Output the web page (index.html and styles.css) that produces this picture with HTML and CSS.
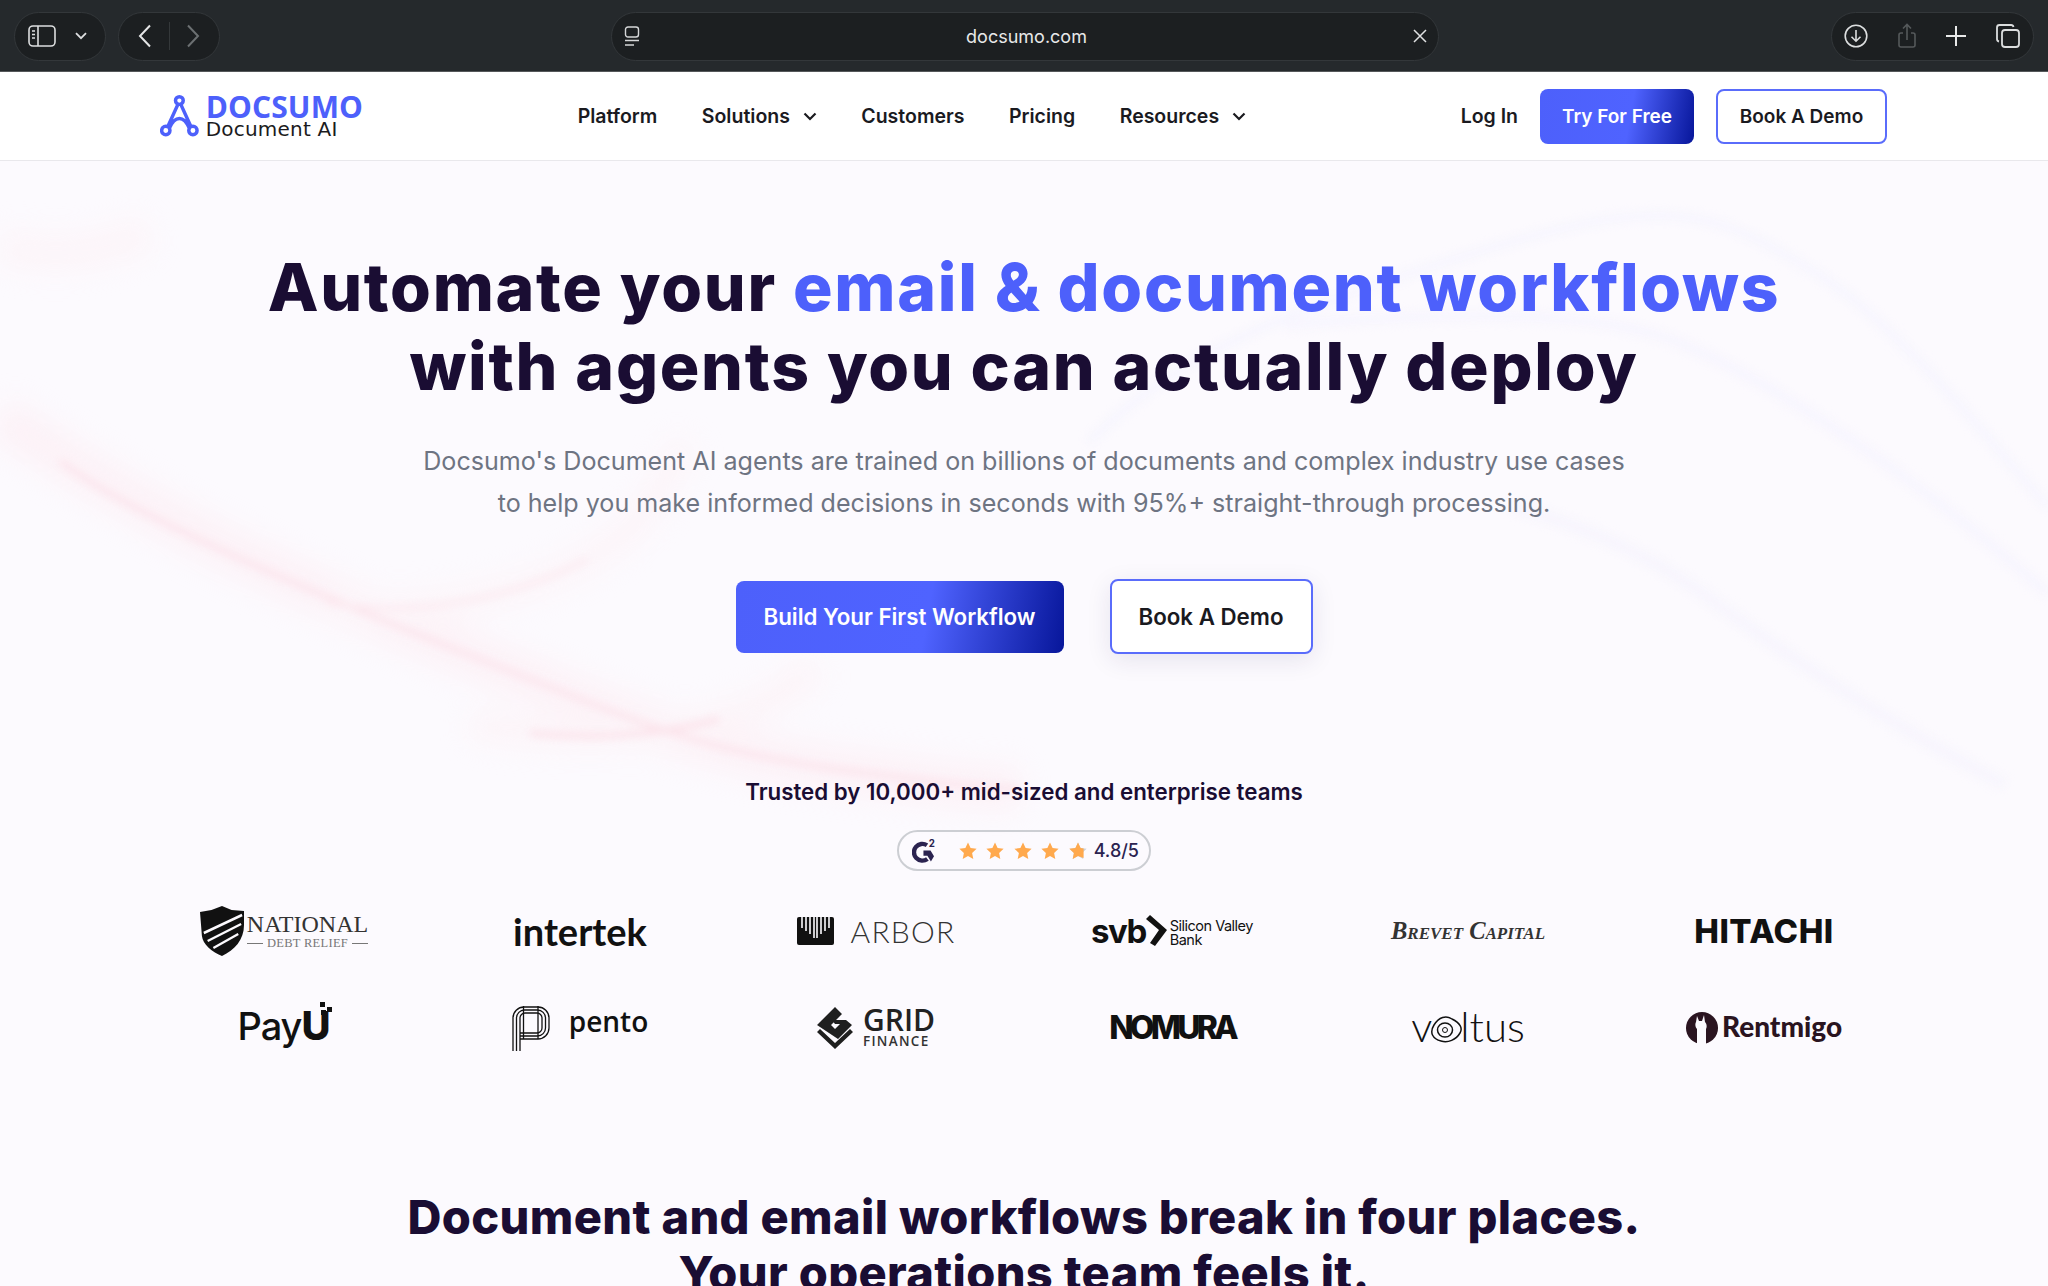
FILE: index.html
```html
<!DOCTYPE html>
<html lang="en">

<head>
    <meta charset="UTF-8">
    <meta name="viewport" content="width=device-width, initial-scale=1.0">
    <link rel="stylesheet" href="styles.css">
    <title>Docsumo</title>
</head>

<body>

    <!-- browser chrome -->
    <header class="toolbar">
        <div class="pill pill-side">
            <svg width="28" height="22" viewBox="0 0 28 22" fill="none" stroke="#dcdedf" stroke-width="1.6"><rect x="1" y="1" width="26" height="20" rx="4"/><path d="M10 1v20"/><path d="M4 6h3M4 9.5h3M4 13h3" stroke-width="1.3"/></svg>
            <svg width="12" height="8" viewBox="0 0 12 8" fill="none" stroke="#dcdedf" stroke-width="1.8"><path d="M1 1.2l5 5 5-5"/></svg>
        </div>
        <div class="pill pill-nav">
            <svg width="14" height="24" viewBox="0 0 14 24" fill="none" stroke="#e4e5e6" stroke-width="2"><path d="M12 1.5L2 12l10 10.5"/></svg>
            <span class="pill-sep"></span>
            <svg width="14" height="24" viewBox="0 0 14 24" fill="none" stroke="#6c7072" stroke-width="2"><path d="M2 1.5L12 12 2 22.5"/></svg>
        </div>
        <div class="pill pill-url">
            <svg width="16" height="21" viewBox="0 0 16 21" fill="none" stroke="#d5d7d8" stroke-width="1.4"><rect x="1.5" y="1" width="13" height="10" rx="2.5"/><path d="M1 14.5h14M1 19h9"/></svg>
            <span class="url-text">docsumo.com</span>
            <svg width="14" height="14" viewBox="0 0 14 14" fill="none" stroke="#e0e1e2" stroke-width="1.5"><path d="M1 1l12 12M13 1L1 13"/></svg>
        </div>
        <div class="pill pill-right">
            <svg width="24" height="24" viewBox="0 0 24 24" fill="none" stroke="#dcdedf" stroke-width="1.6"><circle cx="12" cy="12" r="10.8"/><path d="M12 6v11M7.5 12.8L12 17.2l4.5-4.4"/></svg>
            <svg width="20" height="26" viewBox="0 0 20 26" fill="none" stroke="#55595b" stroke-width="1.6"><path d="M6 10H4a2 2 0 0 0-2 2v10a2 2 0 0 0 2 2h12a2 2 0 0 0 2-2V12a2 2 0 0 0-2-2h-2"/><path d="M10 17V2M6 5.5L10 1.5l4 4"/></svg>
            <svg width="20" height="20" viewBox="0 0 20 20" fill="none" stroke="#e8e9e9" stroke-width="2"><path d="M10 0v20M0 10h20"/></svg>
            <svg width="26" height="26" viewBox="0 0 26 26" fill="none" stroke="#dcdedf" stroke-width="1.8"><rect x="7" y="7" width="17" height="17" rx="3"/><path d="M4 18.5a2.500 2.500 0 0 1-2-2.500V4.500A2.500 2.500 0 0 1 4.500 2H16a2.500 2.500 0 0 1 2.500 2"/></svg>
        </div>
    </header>

    <nav class="site-nav">
        <a class="brand">
            <svg class="brand-mark" width="40" height="44" viewBox="0 0 40 44" fill="none" stroke="#4d60fb" stroke-width="3.6"><circle cx="20" cy="6" r="4"/><circle cx="6" cy="37" r="4.300"/><circle cx="34" cy="37" r="4.300"/><path d="M18.500 10L8 33M21.500 10L32 33M10 34c3-7 7-9.500 10-9.500s7 2.500 10 9.500"/></svg>
            <div class="brand-text">
                <div class="brand-name">DOCSUMO</div>
                <div class="brand-sub">Document AI</div>
            </div>
        </a>

        <div class="nav-links">
            <a>Platform</a>
            <a>Solutions <svg width="14" height="9" viewBox="0 0 14 9" fill="none" stroke="#1a1a1f" stroke-width="2.200"><path d="M1.500 1.500L7 7l5.500-5.500"/></svg></a>
            <a>Customers</a>
            <a>Pricing</a>
            <a>Resources <svg width="14" height="9" viewBox="0 0 14 9" fill="none" stroke="#1a1a1f" stroke-width="2.200"><path d="M1.500 1.500L7 7l5.500-5.500"/></svg></a>
        </div>

        <div class="nav-actions">
            <a class="login">Log In</a>
            <a class="btn btn-primary btn-small">Try For Free</a>
            <a class="btn btn-outline btn-small">Book A Demo</a>
        </div>
    </nav>

    <main class="page">

        <svg class="hero-bg" width="2048" height="1000" viewBox="0 0 2048 1000" fill="none">
            <g class="pale">
                <path d="M0 85C60 100 100 90 150 72" stroke="#fdf0f4" stroke-width="36"/>
                <path d="M0 255C118 337 261 411 457 489S700 590 850 610 980 625 1020 628" stroke="#fdeaf0" stroke-width="44"/>
                <path d="M327 441C418 460 523 433 588 398S660 320 686 281" stroke="#fdf0f4" stroke-width="30"/>
                <path d="M470 563C560 580 660 575 719 558S790 525 817 506" stroke="#fdeff3" stroke-width="30"/>
            </g>
            <g class="thin-pink">
                <path d="M60 300C118 345 261 411 457 489S700 590 850 610 980 625 1020 628" stroke="#fbd9e3" stroke-width="5"/>
                <path d="M327 441C418 460 523 433 588 398" stroke="#fbe1e9" stroke-width="4"/>
                <path d="M530 572C590 578 660 575 719 558" stroke="#fbd9e3" stroke-width="6"/>
            </g>
            <g class="thin-blue">
                <path d="M1089 281C1180 190 1285 151 1481 90S1720 55 1808 107 1980 270 2048 346" stroke="#f6f5fe" stroke-width="8"/>
                <path d="M1285 164C1450 150 1600 150 1677 181S1900 300 2048 433" stroke="#f7f5fe" stroke-width="10"/>
                <path d="M1514 346C1600 370 1660 400 1720 445S1900 570 2004 623" stroke="#f7f5fd" stroke-width="12"/>
            </g>
        </svg>

        <section class="hero">
            <h1>Automate your <span class="accent">email &amp; document workflows</span><br>with agents you can actually deploy</h1>
            <p class="lead">Docsumo's Document AI agents are trained on billions of documents and complex industry use cases<br>to help you make informed decisions in seconds with 95%+ straight-through processing.</p>
            <div class="cta-row">
                <a class="btn btn-primary btn-large">Build Your First Workflow</a>
                <a class="btn btn-outline btn-large btn-shadow">Book A Demo</a>
            </div>
        </section>

        <section class="trust">
            <p class="trust-title">Trusted by 10,000+ mid-sized and enterprise teams</p>
            <div class="rating">
                <svg class="g2" width="28" height="28" viewBox="0 0 28 28" fill="none"><path d="M17 7.500A9.500 9.500 0 1 0 17.500 23" stroke="#2b2350" stroke-width="5"/><path d="M13 13.500h8l4 6.500-3.500 6-4-6.500H13z" fill="#2b2350"/><text x="19" y="9" class="g2-two">2</text></svg>
                <div class="stars">
                    <svg width="20" height="20" viewBox="0 0 20 20"><path class="star" d="M10 1.500l2.600 5.600 6 .7-4.500 4.100 1.200 6L10 15l-5.300 2.900 1.200-6L1.400 7.800l6-.7z"/></svg>
                    <svg width="20" height="20" viewBox="0 0 20 20"><path class="star" d="M10 1.500l2.600 5.600 6 .7-4.500 4.100 1.200 6L10 15l-5.300 2.900 1.200-6L1.400 7.800l6-.7z"/></svg>
                    <svg width="20" height="20" viewBox="0 0 20 20"><path class="star" d="M10 1.500l2.600 5.600 6 .7-4.500 4.100 1.200 6L10 15l-5.300 2.900 1.200-6L1.400 7.800l6-.7z"/></svg>
                    <svg width="20" height="20" viewBox="0 0 20 20"><path class="star" d="M10 1.500l2.600 5.600 6 .7-4.500 4.100 1.200 6L10 15l-5.300 2.900 1.200-6L1.400 7.800l6-.7z"/></svg>
                    <svg width="20" height="20" viewBox="0 0 20 20"><path d="M10 1.500l2.600 5.600 6 .7-4.500 4.100 1.200 6L10 15l-5.300 2.900 1.200-6L1.400 7.800l6-.7z" fill="#cfd0d3"/><path class="star" d="M10 1.500l2.600 5.600 3 .35v9.500L10 15l-5.300 2.900 1.200-6L1.400 7.800l6-.7z"/></svg>
                </div>
                <span class="score">4.8/5</span>
            </div>

            <div class="logos">
                <!-- row 1 -->
                <div class="logo logo-national">
                    <svg width="44" height="50" viewBox="0 0 46 50" preserveAspectRatio="none"><path d="M23 0l10 4 13 1v14c0 15-10 25-23 31C12 46 3 38 2 30L0 6l12-2z" fill="#111"/><path d="M4 27L44 9M8 35L43 18M14 42L40 28" stroke="#fcfafe" stroke-width="2.500" fill="none"/></svg>
                    <div>
                        <div class="nat-top">NATIONAL</div>
                        <div class="nat-bottom"><i></i>DEBT RELIEF<i></i></div>
                    </div>
                </div>
                <div class="logo logo-intertek">intertek</div>
                <div class="logo logo-arbor">
                    <svg width="37" height="28" viewBox="0 0 37 28"><rect width="37" height="28" rx="2" fill="#111"/><path d="M5 0v11M9 0v14M13 0v17M17 0v21M20 0v21M24 0v17M28 0v14M32 0v11" stroke="#fcfafe" stroke-width="1.600"/></svg>
                    <span>ARBOR</span>
                </div>
                <div class="logo logo-svb">
                    <span class="svb-name">svb</span>
                    <svg width="22" height="31" viewBox="0 0 22 31"><path d="M5 0l17 15L10 31l-5-3 9-13L1 4z" fill="#111"/></svg>
                    <span class="svb-sub">Silicon Valley<br>Bank</span>
                </div>
                <div class="logo logo-brevet">Brevet Capital</div>
                <div class="logo logo-hitachi">HITACHI</div>
                <!-- row 2 -->
                <div class="logo logo-payu">
                    <span class="pay">Pay</span><span class="pay-u">U</span>
                    <svg class="pay-dots" width="12" height="14" viewBox="0 0 12 14"><rect x="0" y="0" width="5" height="5" fill="#111"/><rect x="7" y="5" width="5" height="5" fill="#111"/><rect x="1" y="8" width="5" height="5" fill="#111"/></svg>
                </div>
                <div class="logo logo-pento">
                    <svg width="38" height="46" viewBox="0 0 38 46" fill="none" stroke="#111" stroke-width="1.300"><path d="M1 46V13a11 11 0 0 1 11-11h14a11 11 0 0 1 11 11v10a11 11 0 0 1-11 11H8"/><path d="M4.500 46V13a8 8 0 0 1 8-8h13a8 8 0 0 1 8 8v10a8 8 0 0 1-8 8H8"/><path d="M8 46V13a5 5 0 0 1 5-5h12a5 5 0 0 1 5 5v10a5 5 0 0 1-5 5H8z"/><path d="M11.500 1v33M26 1v33"/></svg>
                    <span>pento</span>
                </div>
                <div class="logo logo-grid">
                    <svg width="36" height="42" viewBox="0 0 36 42"><path d="M18 0l7 7-11 11 4 4 5-5h-5l-3-4h14l6 5-14 14L0 18z" fill="#1f1f1f"/><path d="M0 25l18 17 18-17-3-3-15 14L3 22z" fill="#1f1f1f"/></svg>
                    <div>
                        <div class="grid-top">GRID</div>
                        <div class="grid-bottom">FINANCE</div>
                    </div>
                </div>
                <div class="logo logo-nomura">NOMURA</div>
                <div class="logo logo-voltus">
                    <span>v</span><svg width="36" height="30" viewBox="0 0 36 30" fill="none" stroke="#111" stroke-width="1.500"><path d="M6 11c5-8 12-10 18-6 8 4 11 9 8 14-4 7-12 10-19 8C5 25 1 19 6 11z"/><ellipse cx="17" cy="16" rx="7.500" ry="7" /><circle cx="17" cy="16" r="2.500" stroke-width="1"/></svg><span>ltus</span>
                </div>
                <div class="logo logo-rentmigo">
                    <svg width="32" height="32" viewBox="0 0 32 32"><circle cx="16" cy="16" r="16" fill="#2a1420"/><path d="M11 32V17c-2-2-2-5-1-7l1-6 2 5h3l2-6 1 7c2 2 2 5 1 7v15z" fill="#fcfafe"/></svg>
                    <span>Rentmigo</span>
                </div>
            </div>
        </section>

        <section class="breaks">
            <h2>Document and email workflows break in four places.<br>Your operations team feels it.</h2>
        </section>

    </main>

</body>

</html>
```

FILE: styles.css
```css
*{
    padding: 0;
    margin: 0;
    box-sizing: border-box;
}
html, body{
    height: 1286px;
    overflow: hidden;
}
body{
    font-family: Inter, "Liberation Sans", sans-serif;
    background: #fcfafe;
    color: #1a1a1f;
}

/* browser toolbar */
.toolbar{
    height: 72px;
    background: #25292c;
    display: flex;
    align-items: center;
    padding: 1px 14px 0 14px;
    border-bottom: 1px solid #55585a;
}
.pill{
    height: 49px;
    background: #1c1f21;
    border: 1px solid #33373a;
    border-radius: 25px;
    display: flex;
    align-items: center;
}
.pill-side{
    width: 92px;
    justify-content: space-between;
    padding: 0 18px 0 13px;
}
.pill-nav{
    width: 102px;
    margin-left: 12px;
    justify-content: space-between;
    padding: 0 19px;
}
.pill-sep{
    width: 1px;
    height: 28px;
    background: #34383a;
}
.pill-url{
    width: 828px;
    margin-left: 391px;
    padding: 0 11px 0 12px;
    justify-content: space-between;
}
.url-text{
    color: #e8e9e9;
    font-size: 18px;
    font-weight: 400;
}
.pill-right{
    width: 203px;
    margin-left: auto;
    justify-content: space-between;
    padding: 0 12px 0 12px;
}

/* site nav */
.site-nav{
    height: 89px;
    background: #fff;
    border-bottom: 1px solid #e9e8ec;
    padding: 0 161px 0 160px;
    display: flex;
    align-items: center;
    justify-content: space-between;
}
.brand{
    display: flex;
    align-items: center;
    gap: 7px;
    width: 203px;
}
.brand-name{
    color: #4d60fb;
    font-size: 30px;
    font-weight: 700;
    line-height: 27px;
    font-family: "Open Sans", sans-serif;
    letter-spacing: .1px;
}
.brand-sub{
    font-family: "DejaVu Sans", sans-serif;
    font-size: 20px;
    line-height: 19px;
    letter-spacing: .2px;
    color: #1b1b20;
}
.nav-links{
    display: flex;
    align-items: center;
    gap: 44.500px;
    font-size: 19.500px;
    font-weight: 600;
}
.nav-links svg{
    margin-left: 8px;
    vertical-align: 2px;
}
.nav-actions{
    display: flex;
    align-items: center;
    gap: 22px;
}
.login{
    font-size: 19.500px;
    font-weight: 600;
}

.btn{
    display: flex;
    align-items: center;
    justify-content: center;
    font-weight: 600;
}
.btn-primary{
    color: #fff;
    background: linear-gradient(100deg, #4d60fb 0%, #4f63ff 58%, #07169a 100%);
}
.btn-outline{
    background: #fff;
    border: 2px solid #5a6cfb;
}
.btn-small{
    height: 55px;
    font-size: 19px;
    border-radius: 8px;
}
.btn-primary.btn-small{
    width: 154px;
}
.btn-outline.btn-small{
    width: 171px;
}
.btn-large{
    font-size: 22.300px;
    border-radius: 8px;
}
.btn-primary.btn-large{
    width: 328px;
    height: 72px;
}
.btn-outline.btn-large{
    width: 203px;
    height: 75px;
}
.btn-shadow{
    box-shadow: 0 6px 24px rgba(40, 30, 90, .1);
}

/* hero */
.page{
    position: relative;
    height: 1125px;
    overflow: hidden;
}
.hero-bg{
    position: absolute;
    left: 0;
    top: 0;
    pointer-events: none;
}
.pale{
    filter: blur(14px);
    opacity: .5;
}
.thin-pink{
    filter: blur(4px);
    opacity: .65;
}
.thin-blue{
    filter: blur(5px);
}
.hero, .trust, .breaks{
    position: relative;
}
.hero{
    text-align: center;
    padding-top: 87px;
}
h1{
    font-size: 66px;
    line-height: 79px;
    font-weight: 800;
    letter-spacing: 1.700px;
    color: #1a0d33;
}
.accent{
    color: #4d60fb;
}
.lead{
    margin-top: 34px;
    font-size: 25.100px;
    line-height: 42px;
    color: #6e7482;
}
.cta-row{
    margin-top: 55px;
    display: flex;
    justify-content: center;
    align-items: center;
    gap: 46px;
}

/* logos */
.trust{
    margin-top: 122px;
    text-align: center;
}
.trust-title{
    font-size: 22.300px;
    font-weight: 600;
    line-height: 32px;
    color: #1a0d33;
}
.rating{
    width: 254px;
    height: 41px;
    margin: 22px auto 0;
    border: 2px solid #ccced3;
    border-radius: 21px;
    display: flex;
    align-items: center;
    padding: 0 10px 0 13px;
}
.g2-two{
    font-size: 11px;
    font-weight: 700;
    fill: #2b2350;
}
.stars{
    display: flex;
    gap: 7.500px;
    margin-left: 21px;
}
.star{
    fill: #ffa94d;
}
.score{
    margin-left: 6px;
    font-size: 18px;
    font-weight: 500;
    color: #2b2350;
}
.logos{
    width: 1776px;
    margin: 11px auto 0;
    display: grid;
    grid-template-columns: repeat(6, 1fr);
    grid-auto-rows: 97px;
}
.logo{
    display: flex;
    align-items: center;
    justify-content: center;
    color: #111;
}
.logo-national{
    gap: 3px;
}
.nat-top{
    font-family: "Liberation Serif", serif;
    font-size: 24px;
    line-height: 25px;
    color: #333;
}
.nat-bottom{
    font-family: "Liberation Serif", serif;
    font-size: 12.500px;
    line-height: 13px;
    color: #777;
    letter-spacing: .3px;
    display: flex;
    align-items: center;
    gap: 4px;
}
.nat-bottom i{
    flex: 1;
    height: 1px;
    background: #777;
}
.logo-intertek{
    font-family: "Lato", sans-serif;
    font-size: 38px;
    font-weight: 700;
}
.logo-arbor{
    gap: 17px;
}
.logo-arbor span{
    font-family: "Lato", sans-serif;
    font-size: 30px;
    font-weight: 300;
    letter-spacing: 1.200px;
    color: #333;
}
.logo-svb{
    gap: 3px;
}
.svb-name{
    font-size: 33px;
    font-weight: 700;
    letter-spacing: -1.500px;
    margin-right: -4px;
}
.svb-sub{
    font-size: 14.500px;
    line-height: 14px;
    text-align: left;
    letter-spacing: -.5px;
    margin-top: 5px;
}
.logo-brevet{
    font-family: "Liberation Serif", serif;
    font-style: italic;
    font-weight: 700;
    font-variant: small-caps;
    font-size: 24.500px;
    color: #333;
}
.logo-hitachi{
    font-size: 33px;
    font-weight: 800;
    letter-spacing: .5px;
}
.logo-payu{
    align-items: baseline;
    padding-top: 22px;
    position: relative;
}
.pay{
    font-size: 38px;
    font-weight: 500;
    letter-spacing: -1px;
}
.pay-u{
    font-size: 40px;
    font-weight: 800;
}
.pay-dots{
    position: absolute;
    left: 184px;
    top: 23px;
}
.logo-pento{
    gap: 19px;
}
.logo-pento span{
    font-family: "Open Sans", sans-serif;
    font-size: 28px;
    font-weight: 600;
    margin-bottom: 14px;
}
.logo-grid{
    gap: 10px;
    text-align: left;
}
.grid-top{
    font-family: "Open Sans", sans-serif;
    font-size: 30px;
    font-weight: 600;
    line-height: 28px;
    color: #222;
}
.grid-bottom{
    font-family: "Open Sans", sans-serif;
    font-size: 13.500px;
    font-weight: 600;
    line-height: 15px;
    letter-spacing: 1.300px;
    color: #333;
}
.logo-nomura{
    font-size: 32px;
    font-weight: 800;
    letter-spacing: -3.800px;
}
.logo-voltus{
    font-family: "Lato", sans-serif;
    font-size: 42px;
    font-weight: 300;
    padding-bottom: 4px;
}
.logo-voltus svg{
    margin: 6px -4px 0 -4px;
}
.logo-rentmigo{
    gap: 4px;
    color: #2a1420;
    padding-bottom: 3px;
}
.logo-rentmigo svg{
    margin-top: 3px;
}
.logo-rentmigo span{
    font-family: "Lato", sans-serif;
    font-size: 28px;
    font-weight: 900;
}

.breaks{
    margin-top: 113px;
    text-align: center;
}
h2{
    font-size: 47px;
    line-height: 56px;
    font-weight: 800;
    letter-spacing: .35px;
    color: #1a0d33;
}
```
